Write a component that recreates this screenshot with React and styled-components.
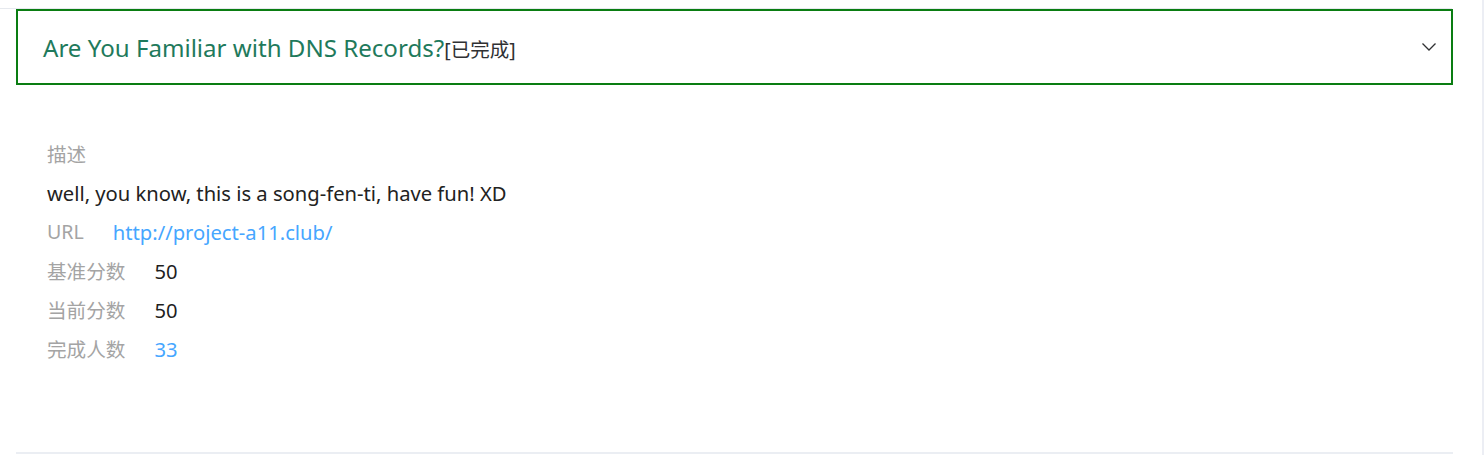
import React from 'react'
import styled, { createGlobalStyle } from 'styled-components'

const Global = createGlobalStyle`
  html, body {
    margin: 0;
    padding: 0;
    background: #fff;
  }
  body {
    font-family: "Noto Sans", "Noto Sans CJK SC", sans-serif;
  }
`
const Page = styled.div`
  width: 1482px;
  height: 455px;
  border-right: 2px solid #eceef4;
  box-sizing: content-box;
  overflow: hidden;
`
const TopRule = styled.div`
  height: 1px;
  margin: 8px 30px 0 0;
  background: #e6e9ee;
`
const Item = styled.div`
  margin: 0 29px 0 16px;
  border-bottom: 2px solid #ebeef3;
`
const Header = styled.div`
  display: flex;
  align-items: center;
  height: 76px;
  box-sizing: border-box;
  border: 2px solid #0a7d12;
  padding: 0 14px 0 25px;
`
const Title = styled.span`
  font-size: 24.1px;
  color: #1f7a5c;
`
const Status = styled.span`
  font-size: 19.5px;
  color: #303133;
  padding-top: 2px;
`
const Arrow = styled.svg`
  margin-left: auto;
  width: 16px;
  height: 10px;
`
const Content = styled.div`
  padding: 49px 30px 84px 31px;
`
const Line = styled.div`
  display: flex;
  height: 39px;
  align-items: center;
  font-size: 20.2px;
  color: #222;
`
const Label = styled.span`
  color: #a4a4a4;
  font-size: 19.6px;
  margin-right: ${(p) => (p.$wide ? 29 : 0)}px;
`
const Value = styled.span`
  color: ${(p) => (p.$link ? '#46a6ff' : '#1f1f1f')};
`

const rows = [
  { label: 'URL', value: 'http://project-a11.club/', link: true },
  { label: '基准分数', value: '50' },
  { label: '当前分数', value: '50' },
  { label: '完成人数', value: '33', link: true },
]

export default function App() {
  return (
    <Page>
      <Global />
      <TopRule />
      <Item>
        <Header>
          <Title>Are You Familiar with DNS Records?</Title>
          <Status>[已完成]</Status>
          <Arrow viewBox="0 0 16 10">
            <polyline points="1.5,1.5 8,8 14.5,1.5" fill="none" stroke="#303133" strokeWidth="1.3" />
          </Arrow>
        </Header>
        <Content>
          <Line>
            <Label>描述</Label>
          </Line>
          <Line>well, you know, this is a song-fen-ti, have fun! XD</Line>
          {rows.map((r) => (
            <Line key={r.label}>
              <Label $wide>{r.label}</Label>
              <Value $link={r.link}>{r.value}</Value>
            </Line>
          ))}
        </Content>
      </Item>
    </Page>
  )
}
